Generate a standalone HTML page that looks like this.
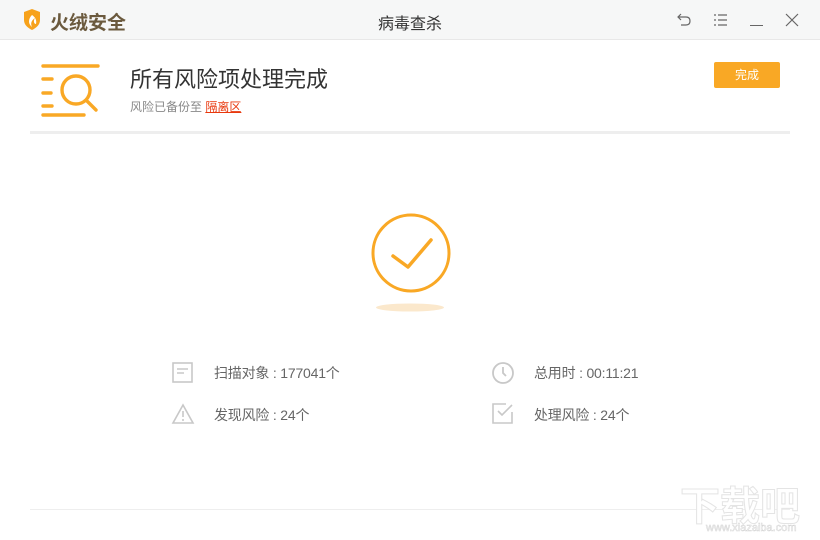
<!DOCTYPE html>
<html><head><meta charset="utf-8"><style>
*{margin:0;padding:0;box-sizing:border-box}
body{width:820px;height:540px;background:#fff;font-family:"Liberation Sans","Noto Sans CJK SC",sans-serif;position:relative;overflow:hidden;color:#333}
.top{position:absolute;left:0;top:0;width:820px;height:40px;background:#f6f7f7;border-bottom:1px solid #e8e8e8}
.abs{position:absolute}
.st{font-size:14px;color:#666;letter-spacing:-0.2px}
</style></head><body>
<div class="top">
<svg class="abs" style="left:22px;top:9px" width="20" height="22" viewBox="0 0 20 22"><path d="M2 3 L10 0 L18 3 L18 11 C18 16 14 19 10 21 C6 19 2 16 2 11Z" fill="#f7a21b"/><path d="M10 6 C6 10 6 15 10 18 C8 14 10 11 13 9 C11 12 12 15 14 15 C15 11 13 8 10 6Z" fill="#fff"/></svg>
<div class="abs" style="left:50px;top:8px;font-size:19px;font-weight:bold;color:#6b5a3e">火绒安全</div>
<div class="abs" style="left:378px;top:10px;font-size:16px;color:#333">病毒查杀</div>
<svg class="abs" style="left:676px;top:12px" width="16" height="16" viewBox="0 0 16 16" fill="none" stroke="#666" stroke-width="1.2"><path d="M5 2 L2 5 L5 8 M2 5 H10 C13 5 14 7 14 9 C14 11 13 13 10 13 H5"/></svg>
<svg class="abs" style="left:712px;top:12px" width="16" height="16" viewBox="0 0 16 16" stroke="#666" stroke-width="1.2"><path d="M2 3h2M2 8h2M2 13h2M6 3h9M6 8h9M6 13h9"/></svg>
<div class="abs" style="left:750px;top:25px;width:13px;height:1px;background:#666"></div>
<svg class="abs" style="left:785px;top:13px" width="14" height="14" viewBox="0 0 14 14" stroke="#666" stroke-width="1.2"><path d="M1 1L13 13M13 1L1 13"/></svg>
</div>
<svg class="abs" style="left:40px;top:63px" width="62" height="54" viewBox="0 0 62 54" fill="none" stroke="#f9a825" stroke-width="3.4" stroke-linecap="round"><path d="M3 3H58M3 16H12M3 30H11M3 43H12M3 52H44"/><circle cx="36" cy="27" r="14"/><path d="M47 38L56 47"/></svg>
<div class="abs" style="left:130px;top:62px;font-size:22px;color:#333">所有风险项处理完成</div>
<div class="abs" style="left:130px;top:98px;font-size:12px;color:#888">风险已备份至 <span style="color:#e8380d;text-decoration:underline">隔离区</span></div>
<div class="abs" style="left:714px;top:62px;width:66px;height:26px;background:#f9a825;border-radius:2px;color:#fff;font-size:12px;text-align:center;line-height:26px">完成</div>
<div class="abs" style="left:30px;top:131px;width:760px;height:3px;background:#eeeeee"></div>
<svg class="abs" style="left:360px;top:205px" width="100" height="115" viewBox="360 205 100 115"><ellipse cx="410" cy="307.5" rx="34" ry="4" fill="#fbe8cc"/><circle cx="411" cy="253" r="38" fill="none" stroke="#f9a825" stroke-width="3"/><path d="M393 256L408 267L431 240" fill="none" stroke="#f9a825" stroke-width="3.5" stroke-linecap="round" stroke-linejoin="round"/></svg>
<svg class="abs" style="left:172px;top:362px" width="22" height="22" viewBox="0 0 22 22" fill="none" stroke="#c8c8c8" stroke-width="1.6"><rect x="1" y="1" width="19" height="19"/><path d="M5 7H16M5 11H12"/></svg>
<div class="abs st" style="left:214px;top:363px">扫描对象 : 177041个</div>
<svg class="abs" style="left:171px;top:403px" width="24" height="22" viewBox="0 0 24 22" fill="none" stroke="#c8c8c8" stroke-width="1.6"><path d="M12 2L22 20H2Z"/><path d="M12 8V14M12 16V18"/></svg>
<div class="abs st" style="left:214px;top:405px">发现风险 : 24个</div>
<svg class="abs" style="left:491px;top:361px" width="24" height="24" viewBox="0 0 24 24" fill="none" stroke="#c8c8c8" stroke-width="1.8"><circle cx="12" cy="12" r="10"/><path d="M12 6V12L15 15"/></svg>
<div class="abs st" style="left:534px;top:363px">总用时 : 00:11:21</div>
<svg class="abs" style="left:492px;top:403px" width="22" height="22" viewBox="0 0 22 22" fill="none" stroke="#c8c8c8" stroke-width="1.6"><path d="M14 1H1V20H20V9"/><path d="M6 8L10 12L20 2"/></svg>
<div class="abs st" style="left:534px;top:405px">处理风险 : 24个</div>
<div class="abs" style="left:30px;top:509px;width:760px;height:1px;background:#eee"></div>
<div class="abs" style="left:680px;top:474px;font-size:40px;color:#fff;-webkit-text-stroke:1px #e4e4e4;font-weight:bold">下载吧</div>
<div class="abs" style="left:706px;top:522px;font-size:11px;color:#fff;-webkit-text-stroke:0.5px #d4d4d4">www.xiazaiba.com</div>
</body></html>
